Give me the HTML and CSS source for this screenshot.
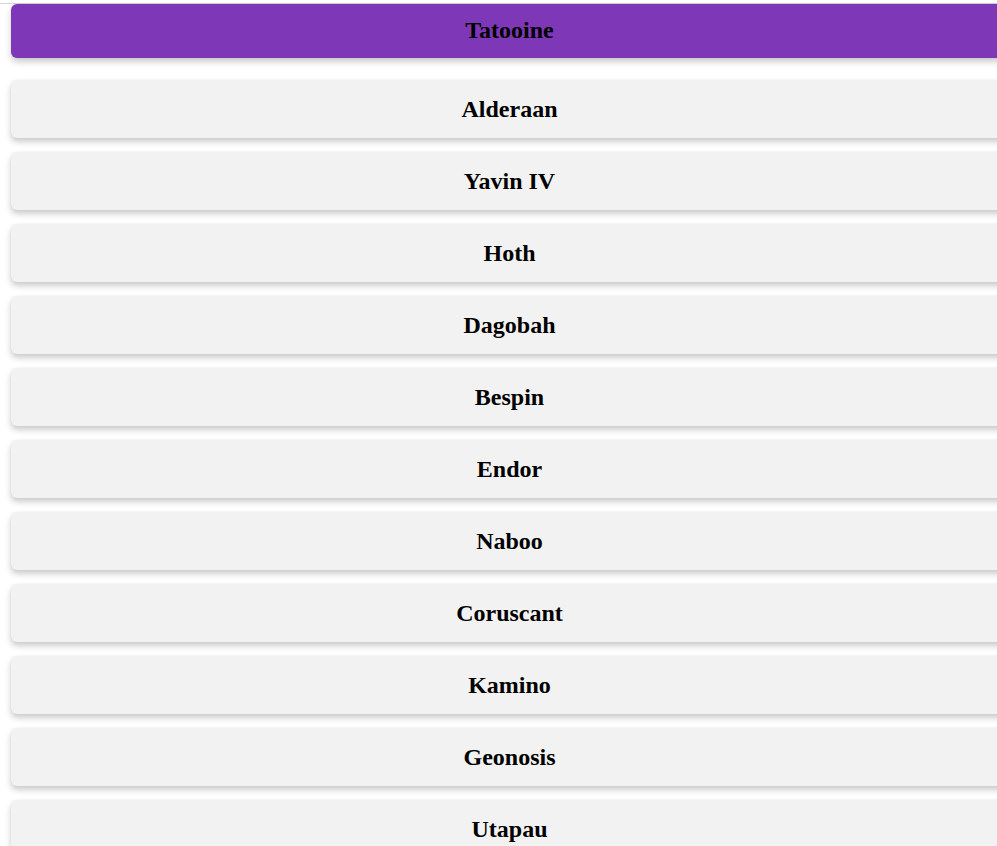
FILE: index.html
```html
<!DOCTYPE html>
<html lang="en">
<head>
<meta charset="utf-8">
<title>Planets</title>
<link rel="stylesheet" href="styles.css">
</head>
<body>
<div class="rule"></div>
<ul class="planets">
  <li class="planet active"><h2>Tatooine</h2></li>
  <li class="planet"><h2>Alderaan</h2></li>
  <li class="planet"><h2>Yavin IV</h2></li>
  <li class="planet"><h2>Hoth</h2></li>
  <li class="planet"><h2>Dagobah</h2></li>
  <li class="planet"><h2>Bespin</h2></li>
  <li class="planet"><h2>Endor</h2></li>
  <li class="planet"><h2>Naboo</h2></li>
  <li class="planet"><h2>Coruscant</h2></li>
  <li class="planet"><h2>Kamino</h2></li>
  <li class="planet"><h2>Geonosis</h2></li>
  <li class="planet"><h2>Utapau</h2></li>
  <li class="planet"><h2>Mustafar</h2></li>
</ul>
</body>
</html>
```
FILE: styles.css
```css
html, body {
  margin: 0;
  padding: 0;
  overflow: hidden;
  background: #ffffff;
}
body {
  font-family: "Liberation Serif", "Times New Roman", serif;
  color: #000;
  width: 1100px;
}
.rule {
  margin-top: 3px;
  height: 1px;
  background: #d6d6d6;
}
.planets {
  list-style: none;
  margin: 0;
  padding: 0 0 0 11px;
  display: flex;
  flex-direction: column;
  gap: 14px;
}
.planet {
  width: 997px;
  height: 58px;
  background: #f2f2f2;
  border-radius: 6px;
  box-shadow: 0 4px 6px rgba(0, 0, 0, 0.2), 0 0 3px rgba(0, 0, 0, 0.05);
  display: flex;
  align-items: center;
  justify-content: center;
}
.planet h2 {
  margin: 0;
  font-size: 24px;
  font-weight: bold;
  line-height: 28px;
}
.planet.active {
  height: 54px;
  background: #7e38b7;
  margin-bottom: 8px;
}
.planet.active h2 {
  margin-bottom: 2px;
}
```
